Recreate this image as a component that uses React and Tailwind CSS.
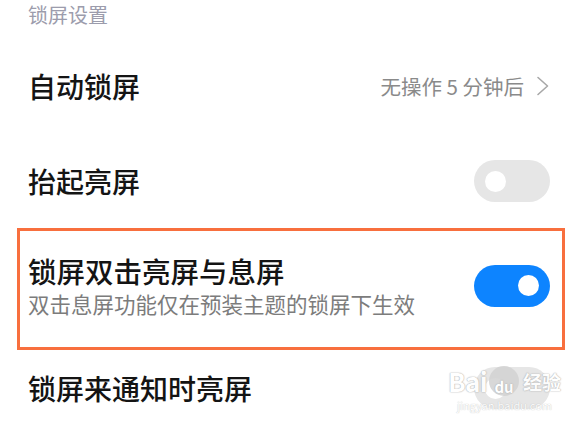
import React from 'react';

const Toggle = ({ on }) => (
  <div
    className={`w-[76px] h-[42px] rounded-full flex items-center px-[11px] ${
      on ? 'bg-[#0d84ff] justify-end' : 'bg-[#e6e6e6] justify-start'
    }`}
  >
    <div className="w-[21px] h-[21px] rounded-full bg-white" />
  </div>
);

const Chevron = () => (
  <svg width="14" height="20" viewBox="0 0 14 20" fill="none">
    <path d="M2 1.5 L11.5 10 L2 18.5" stroke="#a8a8a8" strokeWidth="1.6" strokeLinecap="round" strokeLinejoin="round" />
  </svg>
);

const Watermark = () => (
  <div className="absolute left-[448px] top-[366px] flex flex-col items-center pointer-events-none opacity-90">
    <div className="flex items-center gap-[2px] text-white font-bold [text-shadow:0_0_1.5px_#aaa,0_0_1px_#aaa]">
      <span className="text-[26px] leading-none tracking-tight">Bai</span>
      <span className="w-[30px] h-[30px] rounded-full bg-[#d4d4d4] flex items-end justify-center pb-[2px] text-[15px] leading-none">du</span>
      <span className="text-[19px] leading-none ml-[2px]">经验</span>
    </div>
    <span className="text-[11px] leading-none mt-[4px] text-white [text-shadow:0_0_1px_#aaa]">jingyan.baidu.com</span>
  </div>
);

export default function App() {
  return (
    <div
      className="relative w-[584px] h-[434px] bg-white overflow-hidden"
      style={{ fontFamily: '"Noto Sans CJK SC", "Noto Sans", sans-serif' }}
    >
      <div className="pl-[28px] pt-[2px] h-[38px] text-[20px] leading-[26px] text-[#9c9cac]">锁屏设置</div>

      <div className="h-[96px] flex items-center justify-between pl-[28px] pr-[34px]">
        <span className="text-[28px] font-medium text-[#141414]">自动锁屏</span>
        <div className="flex items-center gap-[12px]">
          <span className="text-[20.5px] text-[#8a8a8a]">无操作 5 分钟后</span>
          <Chevron />
        </div>
      </div>

      <div className="h-[94px] flex items-center justify-between pl-[28px] pr-[34px]">
        <span className="text-[28px] font-medium text-[#141414]">抬起亮屏</span>
        <Toggle on={false} />
      </div>

      <div className="ml-[17px] w-[548px] h-[122px] border-[3px] border-[#f86f3e] flex items-center justify-between pl-[8px] pr-[12px] pb-[7px]">
        <div className="flex flex-col">
          <span className="text-[28.5px] leading-[36px] font-medium text-[#141414]">锁屏双击亮屏与息屏</span>
          <span className="text-[21.5px] leading-[30px] text-[#7c7c7c]">双击息屏功能仅在预装主题的锁屏下生效</span>
        </div>
        <Toggle on />
      </div>

      <div className="h-[76px] flex items-center justify-between pl-[28px] pr-[34px]">
        <span className="text-[28px] font-medium text-[#141414]">锁屏来通知时亮屏</span>
        <Toggle on={false} />
      </div>

      <Watermark />
    </div>
  );
}
